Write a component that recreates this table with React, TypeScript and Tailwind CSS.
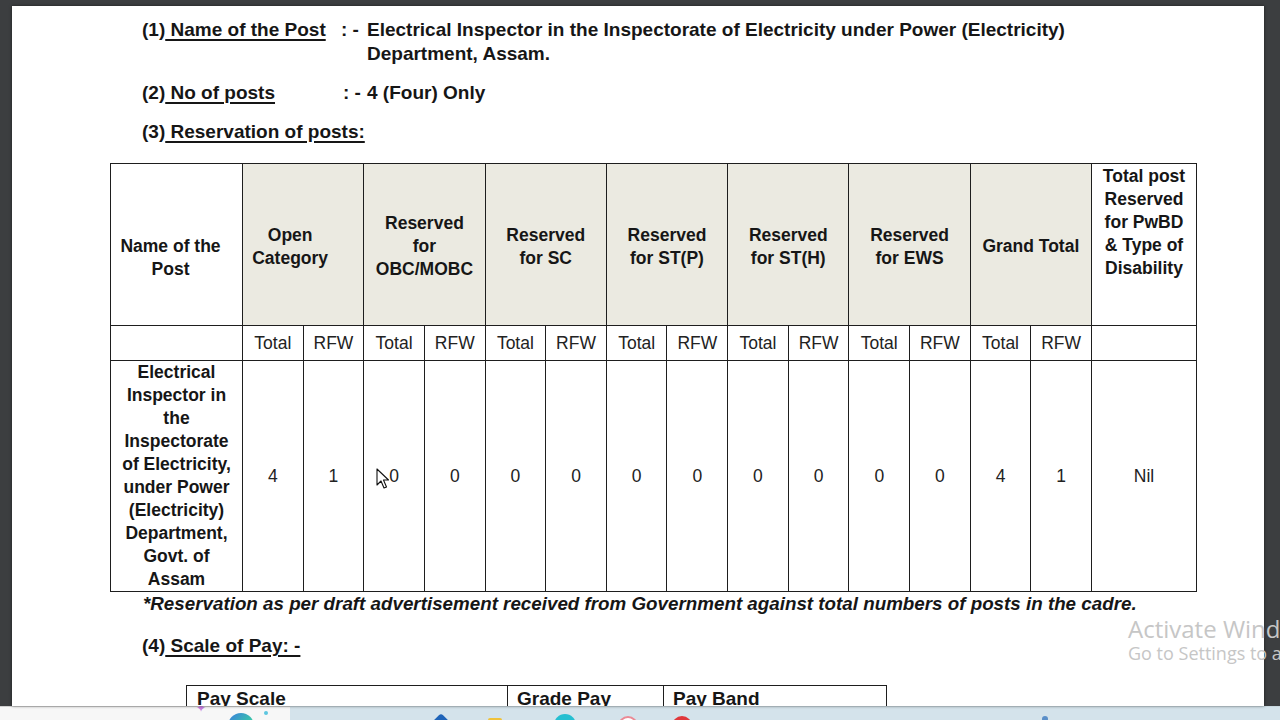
import React from 'react';

const groups = [
  { key: 'open', lines: ['Open', 'Category'], pad: 'pr-[26px]' },
  { key: 'obc', lines: ['Reserved', 'for', 'OBC/MOBC'], pad: 'pr-0' },
  { key: 'sc', lines: ['Reserved', 'for SC'], pad: 'pr-0' },
  { key: 'stp', lines: ['Reserved', 'for ST(P)'], pad: 'pr-0' },
  { key: 'sth', lines: ['Reserved', 'for ST(H)'], pad: 'pr-0' },
  { key: 'ews', lines: ['Reserved', 'for EWS'], pad: 'pr-0' },
  { key: 'grand', lines: ['Grand Total'], pad: 'pr-0' },
];

const values = ['4', '1', '0', '0', '0', '0', '0', '0', '0', '0', '0', '0', '4', '1'];

const postName = [
  'Electrical',
  'Inspector in',
  'the',
  'Inspectorate',
  'of Electricity,',
  'under Power',
  '(Electricity)',
  'Department,',
  'Govt. of',
  'Assam',
];

const cell = 'border-r border-b border-[#1e1e1e]';

function Lines({ lines }: { lines: string[] }) {
  return (
    <div className="text-center">
      {lines.map((l) => (
        <div key={l}>{l}</div>
      ))}
    </div>
  );
}

function Cursor() {
  return (
    <svg className="absolute left-[364px] top-[462px]" width="14" height="22" viewBox="0 0 14 22">
      <path
        d="M1 1 L1 17 L5 13 L8 20 L10.5 19 L7.5 12 L12.5 12 Z"
        fill="#fff"
        stroke="#111"
        strokeWidth="1.1"
        strokeLinejoin="round"
      />
    </svg>
  );
}

export default function App() {
  return (
    <div className="relative flex h-[720px] w-[1280px] flex-col overflow-hidden bg-[#3c3e40] font-['Liberation_Sans',Arial,sans-serif] text-[#161616]">
      <div className="flex h-[706px] pt-[6px]">
        <div className="w-[12px] shrink-0" />
        {/* page */}
        <div className="relative h-[700px] w-[1252px] shrink-0 overflow-hidden bg-white shadow-[0_0_3px_rgba(0,0,0,0.5)]">
          <div className="pt-[12px] text-[19px] font-bold leading-[24px]">
            <div className="ml-[130px] grid grid-cols-[199px_26px_1fr]">
              <div>
                (1)<span className="underline decoration-[1.5px] underline-offset-[3px]"> Name of the Post</span>
              </div>
              <div>: -</div>
              <div>
                Electrical Inspector in the Inspectorate of Electricity under Power (Electricity)
                <br />
                Department, Assam.
              </div>
            </div>
            <div className="ml-[130px] mt-[15px] grid grid-cols-[201px_24px_1fr]">
              <div>
                (2)<span className="underline decoration-[1.5px] underline-offset-[3px]"> No of posts</span>
              </div>
              <div>: -</div>
              <div>4 (Four) Only</div>
            </div>
            <div className="ml-[130px] mt-[15px]">
              (3)<span className="underline decoration-[1.5px] underline-offset-[3px]"> Reservation of posts:</span>
            </div>
          </div>

          {/* reservation table */}
          <div className="ml-[98px] mt-[19px] grid w-[1087px] grid-cols-[132px_repeat(14,minmax(0,1fr))_105px] grid-rows-[162px_35px_231px] border-l border-t border-[#1e1e1e] text-[17.5px] leading-[23px]">
            <div className={`${cell} flex items-center justify-center pr-[12px] pt-[26px] font-bold`}>
              <Lines lines={['Name of the', 'Post']} />
            </div>
            {groups.map((g) => (
              <div
                key={g.key}
                className={`${cell} ${g.pad} col-span-2 flex items-center justify-center bg-[#ebeae1] pt-[4px] font-bold`}
              >
                <Lines lines={g.lines} />
              </div>
            ))}
            <div className={`${cell} flex items-start justify-center pt-[1px] font-bold`}>
              <Lines lines={['Total post', 'Reserved', 'for PwBD', '& Type of', 'Disability']} />
            </div>

            <div className={cell} />
            {values.map((_, i) => (
              <div key={`h${i}`} className={`${cell} flex items-center justify-center text-[#222]`}>
                {i % 2 === 0 ? 'Total' : 'RFW'}
              </div>
            ))}
            <div className={cell} />

            <div className={`${cell} flex items-start justify-center font-bold`}>
              <Lines lines={postName} />
            </div>
            {values.map((v, i) => (
              <div key={`v${i}`} className={`${cell} flex items-center justify-center text-[#222]`}>
                {v}
              </div>
            ))}
            <div className={`${cell} flex items-center justify-center text-[#222]`}>Nil</div>
          </div>

          <div className="ml-[131px] text-[18.8px] font-bold italic leading-[24px]">
            *Reservation as per draft advertisement received from Government against total numbers of posts in the cadre.
          </div>

          <div className="ml-[130px] mt-[18px] text-[19px] font-bold leading-[24px]">
            (4)<span className="underline decoration-[1.5px] underline-offset-[3px]"> Scale of Pay: -</span>
          </div>

          {/* pay scale table */}
          <div className="ml-[174px] mt-[27px] grid w-[701px] grid-cols-[321px_156px_1fr] border-l border-t border-[#1e1e1e] text-[19px] font-bold leading-[24px]">
            <div className={`${cell} h-[40px] px-[10px] pt-[1px]`}>Pay Scale</div>
            <div className={`${cell} h-[40px] px-[9px] pt-[1px]`}>Grade Pay</div>
            <div className={`${cell} h-[40px] px-[9px] pt-[1px]`}>Pay Band</div>
          </div>

          <Cursor />
        </div>
        <div className="flex-1" />
      </div>

      {/* taskbar strip */}
      <div className="flex h-[14px]">
        <div className="flex h-full w-[290px] items-start border-t border-[#d0d0d0] bg-[#f7f7f7]">
          <span className="ml-[196px] mt-[-6px] text-[12px] leading-[14px] text-[#c77ddf]">✦</span>
          <span className="ml-[22px] mt-[6px] h-[26px] w-[26px] rounded-full bg-[linear-gradient(135deg,#3b7be0,#39c7a8_60%,#8fe07a)]" />
          <span className="ml-[10px] mt-[4px] h-[4px] w-[4px] rounded-full bg-[#5cc6e0]" />
        </div>
        <div className="flex flex-1 items-start border-t border-[#c9d8df] bg-[#d4e3eb]">
          <span className="ml-[144px] mt-[9px] h-[14px] w-[14px] rotate-45 rounded-[3px] bg-[#1f64b8]" />
          <span className="ml-[40px] mt-[11px] h-[12px] w-[14px] rounded-[2px] bg-[#f0c23a]" />
          <span className="ml-[52px] mt-[7px] h-[22px] w-[22px] rounded-full bg-[#26bfd1]" />
          <span className="ml-[42px] mt-[9px] h-[20px] w-[20px] rounded-full border-2 border-[#eb8a95] bg-white" />
          <span className="ml-[34px] mt-[9px] h-[20px] w-[20px] rounded-full bg-[#e0383b]" />
          <span className="ml-[350px] mt-[9px] h-[6px] w-[6px] rounded-full bg-[#5b8fc8]" />
        </div>
      </div>

      {/* activation watermark */}
      <div className="pointer-events-none absolute left-[1128px] top-[612px] whitespace-nowrap font-['Open_Sans',sans-serif] text-[#c6c6c6]">
        <div className="text-[24px] leading-[33px]">Activate Windows</div>
        <div className="mt-[-4px] text-[18px] leading-[25px]">Go to Settings to activate Windows.</div>
      </div>
    </div>
  );
}
